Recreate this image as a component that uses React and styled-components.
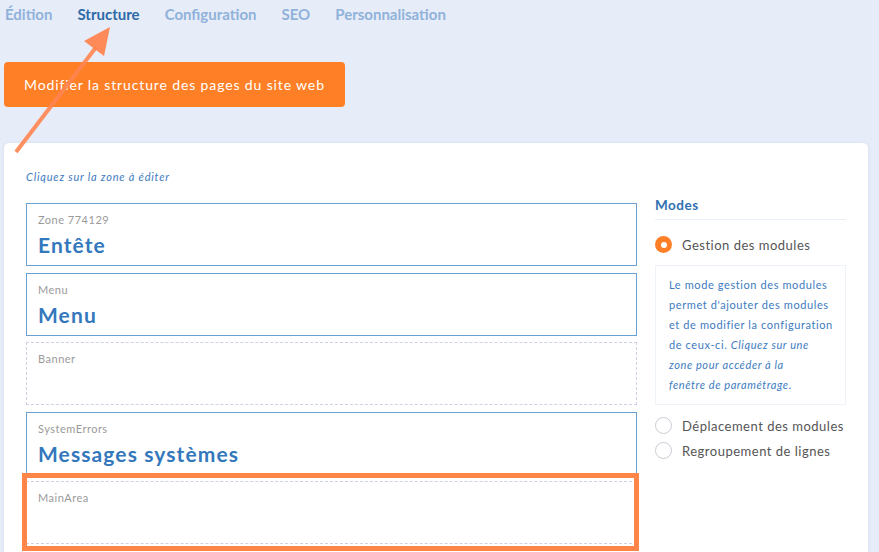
import React from "react";
import styled, { createGlobalStyle } from "styled-components";

const Global = createGlobalStyle`
  html, body { margin: 0; padding: 0; }
  body {
    background: #e6ecf8;
    font-family: "Lato", "Open Sans", sans-serif;
    width: 879px;
    height: 552px;
    overflow: hidden;
  }
`;

const Page = styled.div`
  position: relative;
  width: 879px;
  height: 552px;
  padding: 0 11px 0 4px;
  box-sizing: border-box;
`;

const Tabs = styled.nav`
  display: flex;
  gap: 25px;
  padding: 2px 0 0 1px;
  height: 24px;
  align-items: center;
`;

const Tab = styled.span`
  font-size: 15px;
  font-weight: 700;
  letter-spacing: 0;
  color: ${(p) => (p.$active ? "#2d6aa7" : "#90b2da")};
`;

const Banner = styled.div`
  margin-top: 36px;
  width: 341px;
  height: 45px;
  box-sizing: border-box;
  background: #ff7f27;
  border-radius: 4px;
  color: #fff;
  font-size: 14px;
  letter-spacing: 0.87px;
  display: flex;
  align-items: center;
  padding-left: 20px;
`;

const Card = styled.section`
  margin-top: 36px;
  background: #fff;
  border-radius: 5px;
  box-shadow: 0 0 3px rgba(150, 170, 210, 0.25);
  padding: 27px 22px 0 22px;
  height: 420px;
  box-sizing: border-box;
  display: grid;
  grid-template-columns: 611px 191px;
  column-gap: 18px;
`;

const Hint = styled.div`
  font-size: 11px;
  font-style: italic;
  color: #3d7bbf;
  letter-spacing: 0.8px;
  height: 14px;
  margin-bottom: 19px;
`;

const ZoneList = styled.div`
  position: relative;
  display: flex;
  flex-direction: column;
  gap: 6.5px;
`;

const Zone = styled.div`
  height: 63px;
  box-sizing: border-box;
  border: 1px ${(p) => (p.$empty ? "dashed #ccd3e0" : "solid #6a9fd3")};
  padding: 9px 12px 0 11px;
  background: #fff;
`;

const ZoneLabel = styled.div`
  font-size: 11px;
  color: #9a9a9a;
  letter-spacing: 0.5px;
  line-height: 14px;
`;

const ZoneTitle = styled.div`
  font-size: 21px;
  font-weight: 700;
  color: #3378bc;
  letter-spacing: 1.1px;
  line-height: 26px;
  margin-top: 5px;
`;

const Highlight = styled.div`
  position: absolute;
  left: -4px;
  top: 270px;
  width: 617px;
  height: 78px;
  box-sizing: border-box;
  border: 5px solid #ff8548;
  pointer-events: none;
`;

const Side = styled.aside`
  padding-top: 26px;
`;

const SideTitle = styled.h3`
  margin: 0;
  font-size: 13.5px;
  font-weight: 700;
  color: #3070b0;
  letter-spacing: 0.5px;
  padding-bottom: 5px;
  border-bottom: 1px solid #eaf0f8;
  line-height: 18px;
`;

const Option = styled.label`
  display: flex;
  align-items: center;
  gap: 10px;
  font-size: 13px;
  color: #555;
  letter-spacing: 0.5px;
  white-space: nowrap;
  height: 25px;
  margin-top: ${(p) => p.$mt || 0}px;
`;

const Radio = styled.span`
  width: 17px;
  height: 17px;
  box-sizing: border-box;
  border-radius: 50%;
  flex: none;
  position: relative;
  ${(p) =>
    p.$checked
      ? `background: #ff7f27;
         &::after { content: ""; position: absolute; left: 50%; top: 50%; width: 6px; height: 6px; margin: -3px 0 0 -3px; background: #fff; border-radius: 50%; }`
      : `border: 1px solid #c8ccd4; background: #fff;`}
`;

const Info = styled.div`
  margin: 8px 0 8px 0;
  border: 1px solid #eef2f9;
  padding: 9px 8px 9px 13px;
  font-size: 11px;
  line-height: 20px;
  color: #3d7bbf;
  letter-spacing: 0.6px;
  white-space: nowrap;
`;

const Arrow = styled.svg`
  position: absolute;
  left: 0;
  top: 0;
  pointer-events: none;
`;

export default function App() {
  return (
    <>
      <Global />
      <Page>
        <Tabs>
          <Tab>Édition</Tab>
          <Tab $active>Structure</Tab>
          <Tab>Configuration</Tab>
          <Tab>SEO</Tab>
          <Tab>Personnalisation</Tab>
        </Tabs>
        <Banner>Modifier la structure des pages du site web</Banner>
        <Card>
          <div>
            <Hint>Cliquez sur la zone à éditer</Hint>
            <ZoneList>
              <Zone>
                <ZoneLabel>Zone 774129</ZoneLabel>
                <ZoneTitle>Entête</ZoneTitle>
              </Zone>
              <Zone>
                <ZoneLabel>Menu</ZoneLabel>
                <ZoneTitle>Menu</ZoneTitle>
              </Zone>
              <Zone $empty>
                <ZoneLabel>Banner</ZoneLabel>
              </Zone>
              <Zone>
                <ZoneLabel>SystemErrors</ZoneLabel>
                <ZoneTitle>Messages systèmes</ZoneTitle>
              </Zone>
              <Zone $empty>
                <ZoneLabel>MainArea</ZoneLabel>
              </Zone>
              <Highlight />
            </ZoneList>
          </div>
          <Side>
            <SideTitle>Modes</SideTitle>
            <Option $mt={12}>
              <Radio $checked />
              Gestion des modules
            </Option>
            <Info>
              Le mode gestion des modules
              <br />
              permet d'ajouter des modules
              <br />
              et de modifier la configuration
              <br />
              de ceux-ci. <em>Cliquez sur une</em>
              <br />
              <em>zone pour accéder à la</em>
              <br />
              <em>fenêtre de paramétrage.</em>
            </Info>
            <Option>
              <Radio />
              Déplacement des modules
            </Option>
            <Option>
              <Radio />
              Regroupement de lignes
            </Option>
          </Side>
        </Card>
        <Arrow width="130" height="160" viewBox="0 0 130 160">
          <line x1="16" y1="152" x2="97" y2="46" stroke="#ff8550" strokeOpacity="0.9" strokeWidth="4" />
          <polygon points="110,27 84,41 104,56" fill="#ff8550" fillOpacity="0.95" />
        </Arrow>
      </Page>
    </>
  );
}
